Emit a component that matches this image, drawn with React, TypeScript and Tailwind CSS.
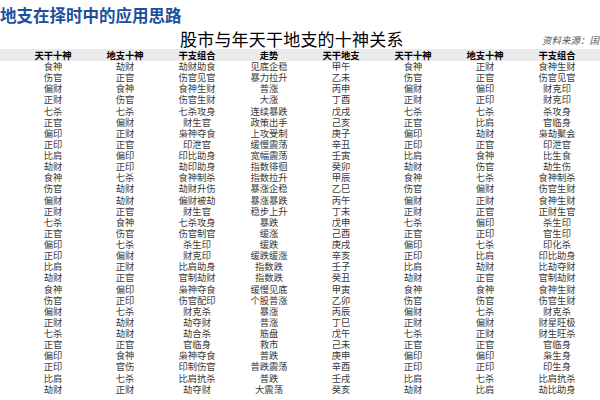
const rows: string[][] = [
  ['食神', '劫财', '劫财助食', '见底企稳', '甲午', '食神', '正财', '食神生财'],
  ['伤官', '正官', '伤官见官', '暴力拉升', '乙未', '伤官', '正官', '伤官见官'],
  ['偏财', '食神', '食神生财', '普涨', '丙申', '偏财', '偏印', '财克印'],
  ['正财', '伤官', '伤官生财', '大涨', '丁酉', '正财', '正印', '财克印'],
  ['七杀', '七杀', '七杀攻身', '连续暴跌', '戊戌', '七杀', '七杀', '杀攻身'],
  ['正官', '偏财', '财生官', '政策出手', '己亥', '正官', '比肩', '官临身'],
  ['偏印', '正财', '枭神夺食', '上攻受制', '庚子', '偏印', '劫财', '枭劫聚会'],
  ['正印', '正官', '印泄官', '缓慢震荡', '辛丑', '正印', '正官', '印泄官'],
  ['比肩', '偏印', '印比助身', '宽幅震荡', '壬寅', '比肩', '食神', '比生食'],
  ['劫财', '正印', '劫印助身', '指数徘徊', '癸卯', '劫财', '伤官', '劫生伤'],
  ['食神', '七杀', '食神制杀', '指数拉升', '甲辰', '食神', '七杀', '食神制杀'],
  ['伤官', '劫财', '劫财升伤', '暴涨企稳', '乙巳', '伤官', '偏财', '伤官生财'],
  ['偏财', '劫财', '偏财被劫', '暴涨暴跌', '丙午', '偏财', '正财', '食神生财'],
  ['正财', '正官', '财生官', '稳步上升', '丁未', '正财', '正官', '正财生官'],
  ['七杀', '食神', '七杀攻身', '暴跌', '戊申', '七杀', '偏印', '杀生印'],
  ['正官', '伤官', '伤官制官', '缓涨', '己酉', '正官', '正印', '官生印'],
  ['偏印', '七杀', '杀生印', '缓跌', '庚戌', '偏印', '七杀', '印化杀'],
  ['正印', '偏财', '财克印', '缓跌缓涨', '辛亥', '正印', '比肩', '印比助身'],
  ['比肩', '正财', '比肩助身', '指数跌', '壬子', '比肩', '劫财', '比劫夺财'],
  ['劫财', '正官', '官制劫财', '指数跌', '癸丑', '劫财', '正官', '官制劫财'],
  ['食神', '偏印', '枭神夺食', '缓慢见底', '甲寅', '食神', '食神', '食神生财'],
  ['伤官', '正印', '伤官配印', '个股普涨', '乙卯', '伤官', '伤官', '伤官生财'],
  ['偏财', '七杀', '财克杀', '暴涨', '丙辰', '偏财', '七杀', '财克杀'],
  ['正财', '劫财', '劫夺财', '普涨', '丁巳', '正财', '偏财', '财星旺极'],
  ['七杀', '劫财', '劫合杀', '筋盘', '戊午', '七杀', '正财', '财生旺杀'],
  ['正官', '正官', '官临身', '救市', '己未', '正官', '正官', '官临身'],
  ['偏印', '食神', '枭神夺食', '普跌', '庚申', '偏印', '偏印', '枭生身'],
  ['正印', '官伤', '印制伤官', '普跌震荡', '辛酉', '正印', '正印', '印生身'],
  ['比肩', '七杀', '比肩抗杀', '普跌', '壬戌', '比肩', '七杀', '比肩抗杀'],
  ['劫财', '正财', '劫夺财', '大震荡', '癸亥', '劫财', '比肩', '劫比助身'],
]

const headers = ['天干十神', '地支十神', '干支组合', '走势', '天干地支', '天干十神', '地支十神', '干支组合']

const cjk = "font-['Noto_Sans_CJK_SC',sans-serif]"

export default function App() {
  return (
    <div className={`h-[400px] w-[600px] overflow-hidden bg-white ${cjk}`}>
      <div className="h-[28px] pt-[4px] text-[16.5px] leading-[22px] font-bold text-[#1d4f9c]">
        地支在择时中的应用思路
      </div>

      <div className="flex h-[21px] items-center">
        <div className="pl-[180px] text-[17px] leading-[20px] tracking-[0.2px] text-black">
          股市与年天干地支的十神关系
        </div>
        <div className="ml-auto w-[58px] overflow-hidden pt-[4px] text-[9.5px] whitespace-nowrap text-[#555] italic">
          资料来源：国信证券
        </div>
      </div>

      <div className="grid h-[12px] grid-cols-[repeat(8,72px)] bg-[#ebebeb] pl-[17px] text-[9.3px] leading-[12px] font-bold text-black">
        {headers.map((h, i) => (
          <div key={i} className="text-center">
            {h}
          </div>
        ))}
      </div>

      <div className="pl-[17px] text-[9.3px] text-[#3a3a3a]">
        {rows.map((row, r) => (
          <div key={r} className="grid h-[11.13px] grid-cols-[repeat(8,72px)] leading-[11.13px]">
            {row.map((cell, c) => (
              <div key={c} className="text-center">
                {cell}
              </div>
            ))}
          </div>
        ))}
      </div>
    </div>
  )
}
